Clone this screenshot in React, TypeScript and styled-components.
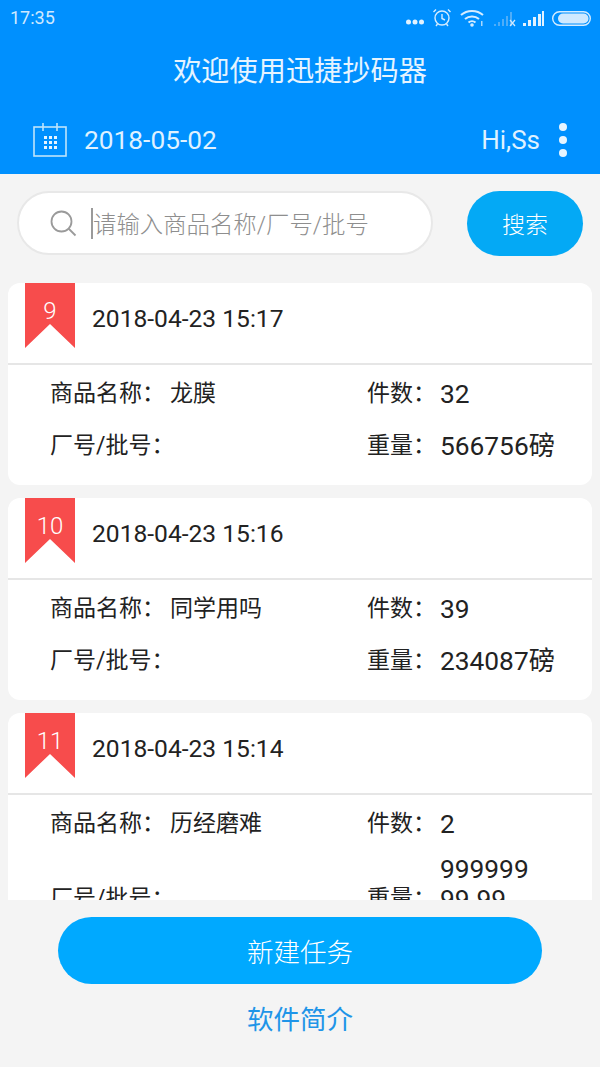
import styled, { createGlobalStyle } from "styled-components";

const GlobalStyle = createGlobalStyle`
  html, body {
    margin: 0;
    padding: 0;
    background: #f4f4f4;
  }
  * {
    box-sizing: border-box;
  }
`;

const Page = styled.div`
  width: 600px;
  height: 1067px;
  overflow: hidden;
  display: flex;
  flex-direction: column;
  background: #f4f4f4;
  font-family: Roboto, "Noto Sans CJK SC", sans-serif;
`;

const Header = styled.header`
  height: 174px;
  flex: none;
  background: #0090fe;
  color: #fff;
`;

const StatusBar = styled.div`
  height: 35px;
  padding: 0 9px 0 10px;
  display: flex;
  align-items: center;
  justify-content: space-between;
  color: #cfe9ff;
  font-size: 18px;
`;

const Title = styled.h1`
  margin: 0;
  height: 70px;
  padding-bottom: 4px;
  display: flex;
  align-items: center;
  justify-content: center;
  font-size: 28.2px;
  font-weight: 400;
  color: #e6f4ff;
`;

const DateBar = styled.div`
  height: 69px;
  padding: 0 33px 0 33px;
  display: flex;
  align-items: center;
  color: #dff1ff;
`;

const DateText = styled.span`
  margin-left: 17px;
  font-size: 26.3px;
  flex: 1;
`;

const Greeting = styled.span`
  font-size: 26px;
`;

const Dots = styled.div`
  margin-left: 19px;
  display: flex;
  flex-direction: column;
  gap: 5px;
`;

const Dot = styled.i`
  display: block;
  width: 8px;
  height: 8px;
  border-radius: 50%;
  background: #e8f5ff;
`;

const SearchRow = styled.div`
  flex: none;
  padding: 17px 17px 0;
  height: 109px;
  display: flex;
  align-items: flex-start;
  justify-content: space-between;
`;

const SearchBox = styled.div`
  width: 416px;
  height: 64px;
  padding-left: 31px;
  display: flex;
  align-items: center;
  background: #fff;
  border: 2px solid #e8e8e8;
  border-radius: 32px;
`;

const Caret = styled.i`
  width: 2px;
  height: 31px;
  margin-left: 14px;
  background: #9a9a9a;
`;

const Placeholder = styled.span`
  font-size: 23.4px;
  font-weight: 300;
  color: #8e8e8e;
`;

const SearchButton = styled.button`
  width: 116px;
  height: 65px;
  padding: 0 0 2px;
  border: 0;
  border-radius: 33px;
  background: #04a9f5;
  color: #fff;
  font: 300 23px Roboto, "Noto Sans CJK SC", sans-serif;
`;

const List = styled.div`
  height: 617px;
  flex: none;
  overflow: hidden;
  padding: 0 8px;
  display: flex;
  flex-direction: column;
  gap: 13px;
`;

const Card = styled.section`
  flex: none;
  background: #fff;
  border-radius: 12px;
  overflow: hidden;
`;

const CardHead = styled.div`
  height: 82px;
  padding-left: 17px;
  display: flex;
  align-items: flex-start;
  border-bottom: 2px solid #e6e6e6;
`;

const Ribbon = styled.div`
  width: 50px;
  height: 65px;
  padding-top: 12px;
  text-align: center;
  font-size: 24px;
  font-weight: 300;
  line-height: 32px;
  color: #fff;
  background: #f74c4c;
  clip-path: polygon(0 0, 100% 0, 100% 100%, 50% 63%, 0 100%);
`;

const CardDate = styled.div`
  margin: 20px 0 0 17px;
  font-size: 24.6px;
  line-height: 32px;
  color: #222;
`;

const CardBody = styled.div`
  padding: 3px 0 13px 42px;
`;

const Row = styled.div`
  min-height: 52px;
  padding: 4px 0;
  display: flex;
  align-items: flex-end;
  font-size: 23px;
  line-height: 30px;
  color: #222;
`;

const LeftCell = styled.div`
  width: 317px;
  margin-bottom: 7px;
  flex: none;
  display: flex;
`;

const RightCell = styled.div`
  margin-bottom: 7px;
  display: flex;
  align-items: flex-end;
`;

const Label = styled.span`
  flex: none;
`;

const Name = styled.span`
  margin-left: 5px;
`;

const Amount = styled.span`
  margin-left: 4px;
  font-size: 26.3px;
`;

const Footer = styled.footer`
  flex: 1;
  padding-top: 17px;
  display: flex;
  flex-direction: column;
  align-items: center;
`;

const NewButton = styled.button`
  width: 484px;
  height: 67px;
  padding: 0;
  border: 0;
  border-radius: 34px;
  background: #00a9ff;
  color: #fff;
  font: 300 26.5px Roboto, "Noto Sans CJK SC", sans-serif;
`;

const AboutLink = styled.a`
  margin-top: 17px;
  font-size: 26.5px;
  line-height: 38px;
  color: #1f95e8;
`;

const CalendarIcon = () => (
  <svg width="34" height="34" viewBox="0 0 34 34" fill="none" stroke="#bfe4fb" strokeWidth="1.6">
    <rect x="1" y="4" width="32" height="29" />
    <path d="M10 0v8M24 0v8" />
    <path
      d="M11 13h3v3h-3zM16 13h3v3h-3zM21 13h3v3h-3zM11 18h3v3h-3zM16 18h3v3h-3zM21 18h3v3h-3zM11 23h3v3h-3zM16 23h3v3h-3zM21 23h3v3h-3z"
      fill="#e4f4ff"
      stroke="none"
    />
  </svg>
);

const SearchIcon = () => (
  <svg width="27" height="27" viewBox="0 0 27 27" fill="none" stroke="#9a9a9a" strokeWidth="1.8">
    <circle cx="11.5" cy="11.5" r="10" />
    <path d="M18.5 18.5l7 7" />
  </svg>
);

const StatusIcons = () => (
  <svg width="185" height="34" viewBox="0 0 185 34" fill="none">
    <circle cx="2.5" cy="21" r="2.5" fill="#e2f2ff" />
    <circle cx="9" cy="21" r="2.5" fill="#e2f2ff" />
    <circle cx="15.5" cy="21" r="2.5" fill="#e2f2ff" />
    <g stroke="#d5ecff" strokeWidth="1.4">
      <circle cx="36" cy="17" r="7" />
      <path d="M36 13v4.5l3 1.5M30 8.5l-2.500 2.500M42 8.500l2.500 2.500M31.500 23l-1.500 2M40.500 23l1.500 2" />
    </g>
    <path d="M55 14c6-5.500 16-5.500 22 0M59 18c4-3.500 10-3.500 14 0M62.500 21.500c2-1.800 5-1.800 7 0" stroke="#d5ecff" strokeWidth="2" />
    <circle cx="66" cy="24" r="1.8" fill="#d5ecff" />
    <rect x="75" y="20" width="1.5" height="5" fill="#a9d7fb" />
    <path d="M88 23h2v2h-2zM92 21h2v4h-2zM96 18h2v7h-2zM100 15h2v10h-2zM104 11h2v14h-2z" fill="#4fadf8" />
    <path d="M104 19l5 6M109 19l-5 6" stroke="#cfe9ff" strokeWidth="1.2" />
    <path d="M117 22h3v3h-3zM122 19h3v6h-3zM127 16h3v9h-3zM132 13h3v12h-3zM136 10h2v15h-2z" fill="#e2f2ff" />
    <rect x="146.7" y="10.7" width="37.6" height="13.6" rx="6.8" stroke="#d5ecff" strokeWidth="1.4" />
    <rect x="152" y="12.5" width="30.5" height="10" rx="5" fill="#cfe9ff" />
  </svg>
);

type Task = {
  id: number;
  time: string;
  name: string;
  count: string;
  weight: string[];
};

const tasks: Task[] = [
  { id: 9, time: "2018-04-23 15:17", name: "龙膜", count: "32", weight: ["566756磅"] },
  { id: 10, time: "2018-04-23 15:16", name: "同学用吗", count: "39", weight: ["234087磅"] },
  { id: 11, time: "2018-04-23 15:14", name: "历经磨难", count: "2", weight: ["999999", "99.99"] },
];

const App = () => {
  return (
    <Page>
      <GlobalStyle />
      <Header>
        <StatusBar>
          <span>17:35</span>
          <StatusIcons />
        </StatusBar>
        <Title>欢迎使用迅捷抄码器</Title>
        <DateBar>
          <CalendarIcon />
          <DateText>2018-05-02</DateText>
          <Greeting>Hi,Ss</Greeting>
          <Dots>
            <Dot />
            <Dot />
            <Dot />
          </Dots>
        </DateBar>
      </Header>
      <SearchRow>
        <SearchBox>
          <SearchIcon />
          <Caret />
          <Placeholder>请输入商品名称/厂号/批号</Placeholder>
        </SearchBox>
        <SearchButton>搜索</SearchButton>
      </SearchRow>
      <List>
        {tasks.map((task) => (
          <Card key={task.id}>
            <CardHead>
              <Ribbon>{task.id}</Ribbon>
              <CardDate>{task.time}</CardDate>
            </CardHead>
            <CardBody>
              <Row>
                <LeftCell>
                  <Label>商品名称：</Label>
                  <Name>{task.name}</Name>
                </LeftCell>
                <RightCell>
                  <Label>件数：</Label>
                  <Amount>{task.count}</Amount>
                </RightCell>
              </Row>
              <Row>
                <LeftCell>
                  <Label>厂号/批号：</Label>
                </LeftCell>
                <RightCell>
                  <Label>重量：</Label>
                  <Amount>
                    {task.weight.map((part) => (
                      <div key={part}>{part}</div>
                    ))}
                  </Amount>
                </RightCell>
              </Row>
            </CardBody>
          </Card>
        ))}
      </List>
      <Footer>
        <NewButton>新建任务</NewButton>
        <AboutLink>软件简介</AboutLink>
      </Footer>
    </Page>
  );
};

export default App;
